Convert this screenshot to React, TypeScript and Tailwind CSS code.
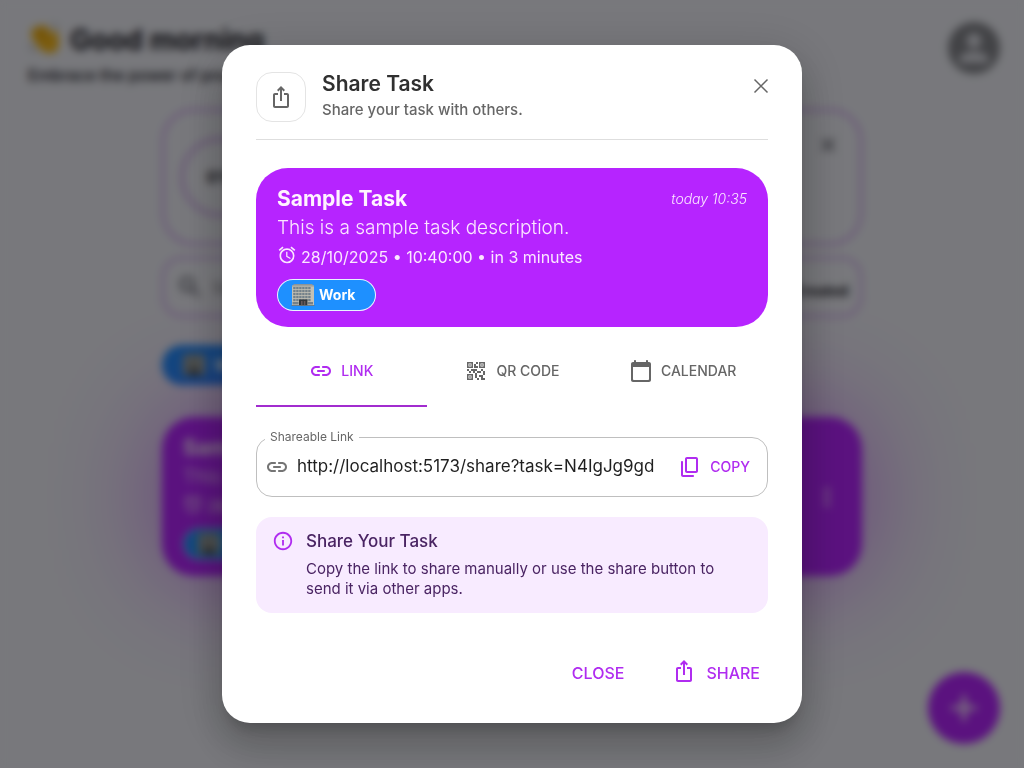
import { useState } from "react";
import type { ReactNode } from "react";
import { MdAlarm, MdInfoOutline, MdQrCode2, MdSearch, MdAdd, MdMoreVert, MdPerson, MdClose } from "react-icons/md";

type IconProps = { className?: string };

function Glyph({ d, className }: IconProps & { d: string }) {
  return (
    <svg viewBox="0 0 24 24" fill="currentColor" className={className} aria-hidden="true">
      <path d={d} />
    </svg>
  );
}

const LINK =
  "M17 7h-3c-.55 0-1 .45-1 1s.45 1 1 1h3c1.65 0 3 1.35 3 3s-1.35 3-3 3h-3c-.55 0-1 .45-1 1s.45 1 1 1h3c2.76 0 5-2.24 5-5s-2.24-5-5-5zm-9 5c0 .55.45 1 1 1h6c.55 0 1-.45 1-1s-.45-1-1-1H9c-.55 0-1 .45-1 1zm2 3H7c-1.65 0-3-1.35-3-3s1.35-3 3-3h3c.55 0 1-.45 1-1s-.45-1-1-1H7c-2.76 0-5 2.24-5 5s2.24 5 5 5h3c.55 0 1-.45 1-1s-.45-1-1-1z";
const CALENDAR =
  "M20 3h-1V2c0-.55-.45-1-1-1s-1 .45-1 1v1H7V2c0-.55-.45-1-1-1s-1 .45-1 1v1H4c-1.1 0-2 .9-2 2v16c0 1.1.9 2 2 2h16c1.1 0 2-.9 2-2V5c0-1.1-.9-2-2-2zm-1 18H5c-.55 0-1-.45-1-1V8h16v12c0 .55-.45 1-1 1z";
const COPY =
  "M15 20H5V7c0-.55-.45-1-1-1s-1 .45-1 1v13c0 1.1.9 2 2 2h10c.55 0 1-.45 1-1s-.45-1-1-1zm5-4V4c0-1.1-.9-2-2-2H9c-1.1 0-2 .9-2 2v12c0 1.1.9 2 2 2h9c1.1 0 2-.9 2-2zm-2 0H9V4h9v12z";
const SHARE =
  "M16 5l-1.42 1.42-1.59-1.59V16h-1.98V4.83L9.42 6.42 8 5l4-4 4 4zm4 5v11c0 1.1-.9 2-2 2H6c-1.11 0-2-.9-2-2V10c0-1.11.89-2 2-2h3v2H6v11h12V10h-3V8h3c1.1 0 2 .89 2 2z";

function OfficeBuilding({ className }: IconProps) {
  const columns = [3, 6, 9, 12, 15, 18];
  const rows = [4, 7, 10, 13, 16];
  return (
    <svg viewBox="0 0 24 24" className={className} aria-hidden="true">
      <rect x="2.5" y="1" width="19" height="2.5" fill="#8b9499" />
      <rect x="1" y="2.5" width="22" height="20" fill="#c3c0b4" />
      <rect x="1" y="2.5" width="22" height="1" fill="#9a9c98" />
      {rows.map((y) =>
        columns.map((x) => <rect key={`${x}-${y}`} x={x - 0.8} y={y} width="2.4" height="2.2" fill="#74818a" />),
      )}
      <rect x="1.6" y="19" width="6" height="2.4" fill="#74818a" />
      <rect x="16.6" y="19" width="5.4" height="2.4" fill="#74818a" />
      <rect x="8" y="16.5" width="8.4" height="6" fill="#33373b" />
      <rect x="10" y="18" width="1.6" height="4.5" fill="#66595a" />
      <rect x="12.8" y="18" width="1.6" height="4.5" fill="#66595a" />
      <rect x="0.5" y="22.2" width="23" height="0.8" fill="#65717b" />
    </svg>
  );
}

function WavingHand({ className }: IconProps) {
  return (
    <svg viewBox="0 0 32 32" className={className} aria-hidden="true">
      <path
        d="M3 8c1-3 4-2 5-1 0-4 4-5 6-2 2-3 5-2 6 1l4 7 1-3c1-3 5-1 5 2l1 9c0 7-4 11-10 10-6 0-9-4-12-8l-5-7c-2-3-1-5 1-5z"
        fill="#f7b91e"
      />
      <path d="M8 8l7 11M13 6l7 11" stroke="#d08c00" strokeWidth="1.5" />
      <path d="M2 22c1 4 3 6 6 7M24 2c3 1 5 3 6 5" stroke="#8a8a90" strokeWidth="1.5" fill="none" />
    </svg>
  );
}

function CategoryChip({ large }: { large?: boolean }) {
  return (
    <span
      className={
        large
          ? "flex h-10 w-fit items-center gap-2 rounded-full bg-[#1e90ff] px-5 text-base font-bold text-white"
          : "flex h-8 w-fit items-center gap-1 rounded-full border border-white/90 bg-[#1e90ff] pr-5 pl-[13px] text-sm font-bold text-white"
      }
    >
      <OfficeBuilding className="size-6" />
      Work
    </span>
  );
}

function TaskCard({ menu }: { menu?: boolean }) {
  return (
    <div className="flex items-center gap-8 rounded-[32px] bg-[#b624ff] px-[21px] py-4 text-[#fbe6ff]">
      <div className="min-w-0 flex-1">
        <div className="flex h-[30px] items-center justify-between gap-4">
          <h3 className="text-[21px] font-bold text-[#fff2ff]">Sample Task</h3>
          <span className="text-sm font-light italic">today 10:35</span>
        </div>
        <p className="text-[19px] leading-7 font-light">This is a sample task description.</p>
        <p className="mb-[7px] flex h-[30px] items-center gap-1 text-base">
          <MdAlarm className="mb-1 size-5" aria-hidden="true" />
          28/10/2025 • 10:40:00 • in 3 minutes
        </p>
        <CategoryChip />
      </div>
      {menu && <MdMoreVert className="size-7" />}
    </div>
  );
}

function TaskPage() {
  return (
    <div className="min-h-screen bg-[#f0f1f8] text-[#17171f]" aria-hidden="true" inert>
      <header className="flex items-start justify-between pt-5 pr-6 pl-7">
        <div>
          <h1 className="flex h-10 items-center gap-[10px] text-[28px] font-bold">
            <WavingHand className="mb-1 size-8" />
            Good morning
          </h1>
          <p className="mt-[3px] text-base leading-6 font-medium">Embrace the power of productivity</p>
        </div>
        <div className="mt-[2px] flex size-[52px] items-center justify-center rounded-full bg-[#85868c] text-[#dfe0e8]">
          <MdPerson className="size-11" />
        </div>
      </header>
      <main className="mx-auto mt-[22px] max-w-[700px]">
        <section className="flex h-[136px] items-center justify-between rounded-[32px] border-2 border-[#c486f0] px-4">
          <div className="flex size-20 items-center justify-center rounded-full border-4 border-[#d3b0ee] text-base font-bold">
            0%
          </div>
          <MdClose className="mr-1 mb-16 size-6 text-[#555560]" />
        </section>
        <div className="mt-3 flex h-[60px] items-center gap-2 rounded-[20px] border-2 border-[#c994f0] px-3">
          <MdSearch className="size-7 text-[#555560]" />
          <span className="flex-1 text-base text-[#888890]">Search for task...</span>
          <span className="pt-2 text-sm font-bold">Date Created</span>
        </div>
        <div className="mt-7 mb-8">
          <CategoryChip large />
        </div>
        <div className="rounded-[32px] shadow-[0_0_128px_-20px_#b624ff]">
          <TaskCard menu />
        </div>
      </main>
      <div className="fixed right-6 bottom-6 flex size-[72px] items-center justify-center rounded-full bg-[#b624ff] text-white">
        <MdAdd className="size-11" />
      </div>
    </div>
  );
}

function Tab({ active, onSelect, children }: { active: boolean; onSelect: () => void; children: ReactNode }) {
  return (
    <button
      type="button"
      role="tab"
      aria-selected={active}
      onClick={onSelect}
      className={
        active
          ? "flex h-[72px] flex-1 items-center justify-center gap-2 border-b-2 border-[#a22ccf] pt-[2px] text-sm font-medium text-[#b02cf0]"
          : "flex h-[72px] flex-1 items-center justify-center gap-2 border-b-2 border-transparent pt-[2px] text-sm font-medium text-[#666666]"
      }
    >
      {children}
    </button>
  );
}

export default function App() {
  const [tab, setTab] = useState("link");
  return (
    <div className="font-['Inter','Liberation_Sans',sans-serif]">
      <TaskPage />
      <div className="fixed inset-0 flex items-center justify-center bg-black/50 p-4 backdrop-blur-[4px]">
        <div
          role="dialog"
          aria-modal="true"
          aria-labelledby="share-title"
          className="w-full max-w-[580px] rounded-[28px] bg-white px-[34px] pt-[27px] pb-7 shadow-[0_11px_15px_-7px_rgba(0,0,0,0.2),0_24px_38px_3px_rgba(0,0,0,0.14),0_9px_46px_8px_rgba(0,0,0,0.12)]"
        >
          <header className="flex items-start gap-4 border-b border-[#dedede] pb-[17px]">
            <div className="flex size-[50px] items-center justify-center rounded-2xl border border-[#e4e4e4] text-[#666666]">
              <Glyph d={SHARE} className="size-6" />
            </div>
            <div className="flex-1">
              <h2 id="share-title" className="text-[21px] leading-6 font-semibold text-[#303030]">
                Share Task
              </h2>
              <p className="mt-1 text-[15px] leading-5 font-medium text-[#666666]">Share your task with others.</p>
            </div>
            <button type="button" aria-label="Close dialog" className="-mr-[5px] pt-[2px] text-[#666666]">
              <svg viewBox="0 0 24 24" className="size-6" fill="none" stroke="currentColor" strokeWidth="1.5" aria-hidden="true">
                <path d="M5.5 5.5l13 13M18.5 5.5l-13 13" />
              </svg>
            </button>
          </header>

          <div className="mt-7">
            <TaskCard />
          </div>

          <div role="tablist" aria-label="Share options" className="mt-2 flex">
            <Tab active={tab === "link"} onSelect={() => setTab("link")}>
              <Glyph d={LINK} className="size-6" />
              LINK
            </Tab>
            <Tab active={tab === "qr"} onSelect={() => setTab("qr")}>
              <MdQrCode2 className="size-6" />
              QR CODE
            </Tab>
            <Tab active={tab === "calendar"} onSelect={() => setTab("calendar")}>
              <Glyph d={CALENDAR} className="size-6" />
              CALENDAR
            </Tab>
          </div>

          <fieldset className="mt-[21px] min-w-0 rounded-2xl border border-[#bfbfbf] px-2 pb-2">
            <legend className="px-[5px] text-xs leading-[18px] text-[#666666]">
              <label htmlFor="share-link">Shareable Link</label>
            </legend>
            <div className="flex h-[42px] items-center">
              <Glyph d={LINK} className="size-6 shrink-0 text-[#757575]" />
              <input
                id="share-link"
                readOnly
                value="http://localhost:5173/share?task=N4IgJg9gd"
                className="ml-2 min-w-0 flex-1 bg-transparent text-[17px] text-[#1f1f1f] outline-none"
              />
              <button type="button" className="ml-4 flex items-center gap-2 pr-[9px] text-sm font-medium text-[#b02cf0]">
                <Glyph d={COPY} className="size-6" />
                COPY
              </button>
            </div>
          </fieldset>

          <section className="mt-5 flex gap-3 rounded-2xl bg-[#f8ebff] px-4 pt-3 pb-[14px] text-[#4a2463]">
            <MdInfoOutline className="mt-[1px] size-[22px] shrink-0 text-[#b02cf0]" aria-hidden="true" />
            <div className="pr-4">
              <h3 className="text-[17px] leading-6 font-medium">Share Your Task</h3>
              <p className="mt-[6px] text-[15px] leading-5">
                Copy the link to share manually or use the share button to send it via other apps.
              </p>
            </div>
          </section>

          <footer className="mt-[38px] mb-[1px] flex h-[43px] items-center justify-end text-base font-medium text-[#b02cf0]">
            <button type="button" className="h-full px-4">
              CLOSE
            </button>
            <button type="button" className="ml-8 flex h-full items-center gap-[10px] pr-2">
              <Glyph d={SHARE} className="mb-1 size-6" />
              SHARE
            </button>
          </footer>
        </div>
      </div>
    </div>
  );
}
